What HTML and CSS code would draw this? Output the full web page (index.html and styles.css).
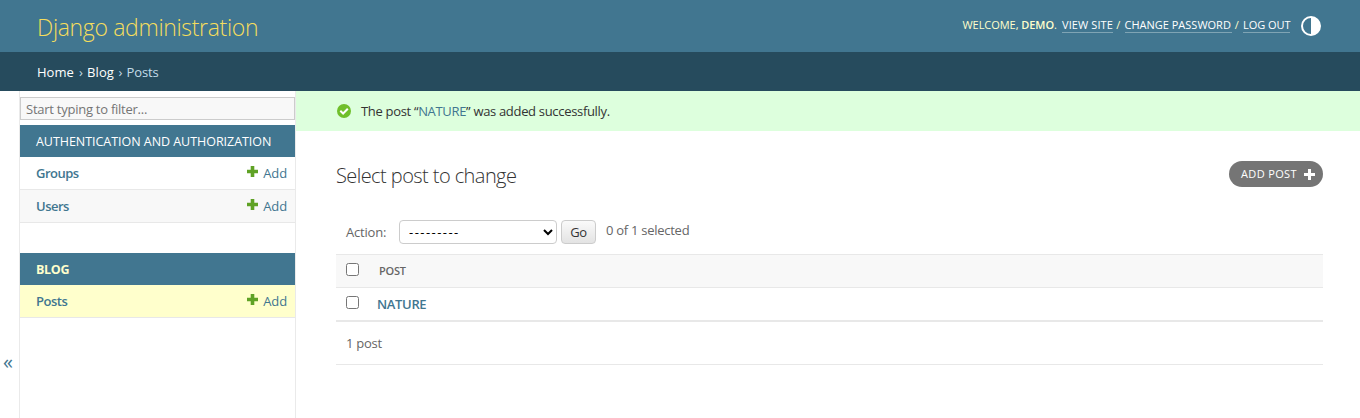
FILE: index.html
```html
<!DOCTYPE html>
<html lang="en">
<head>
<meta charset="utf-8">
<title>Select post to change | Django site admin</title>
<link rel="stylesheet" href="styles.css">
</head>
<body>
<header class="header">
  <h1 class="brand"><span class="t-brand">Django administration</span></h1>
  <div class="user-tools">
    <span class="t-welcome">Welcome, <strong>demo</strong>.</span>
    <a class="t-site" href="#">View site</a><span class="slash">/</span><a class="t-password" href="#">Change password</a><span class="slash">/</span><a class="t-logout" href="#">Log out</a>
    <svg class="theme-icon" viewBox="0 0 20 20"><circle cx="10" cy="10" r="9" fill="none" stroke="#fff" stroke-width="2"/><path d="M10 1a9 9 0 0 1 0 18z" fill="#fff"/></svg>
  </div>
</header>
<nav class="breadcrumbs"><a class="t-home" href="#">Home</a><i>›</i><a class="t-blog" href="#">Blog</a><i>›</i><span class="t-posts">Posts</span></nav>
<div class="main">
  <button class="toggle-nav" aria-label="Toggle navigation">«</button>
  <aside class="sidebar">
    <input class="nav-filter" type="text" placeholder="Start typing to filter...">
    <section class="module">
      <h2><span class="t-auth">Authentication and Authorization</span></h2>
      <div class="model"><a class="name" href="#">Groups</a><a class="add" href="#"><svg viewBox="0 0 11 11"><path d="M3.7 0h3.6v3.7H11v3.6H7.3V11H3.7V7.3H0V3.7h3.7z"/></svg><span>Add</span></a></div>
      <div class="model even"><a class="name" href="#">Users</a><a class="add" href="#"><svg viewBox="0 0 11 11"><path d="M3.7 0h3.6v3.7H11v3.6H7.3V11H3.7V7.3H0V3.7h3.7z"/></svg><span>Add</span></a></div>
    </section>
    <section class="module">
      <h2 class="current-app"><span>Blog</span></h2>
      <div class="model current"><a class="name" href="#">Posts</a><a class="add" href="#"><svg viewBox="0 0 11 11"><path d="M3.7 0h3.6v3.7H11v3.6H7.3V11H3.7V7.3H0V3.7h3.7z"/></svg><span>Add</span></a></div>
    </section>
  </aside>
  <main class="content-wrap">
    <div class="message">
      <svg viewBox="0 0 14 14"><circle cx="7" cy="7" r="7" fill="#70bf2b"/><path d="M3.3 6.8L6.1 9.5L10.8 4.7" fill="none" stroke="#fff" stroke-width="2"/></svg>
      <span class="t-message">The post “<a href="#">NATURE</a>” was added successfully.</span>
    </div>
    <div class="content">
      <div class="title-row">
        <h2 class="title"><span class="t-title">Select post to change</span></h2>
        <a class="add-post" href="#"><span>Add post</span><svg viewBox="0 0 11 11"><path d="M4 0h3v4h4v3H7v4H4V7H0V4h4z"/></svg></a>
      </div>
      <div class="actions">
        <label for="action">Action:</label>
        <select id="action"><option>---------</option></select>
        <button class="go">Go</button>
        <span class="counter">0 of 1 selected</span>
      </div>
      <div class="results">
        <div class="row head"><input type="checkbox" aria-label="Select all"><span class="t-column">Post</span></div>
        <div class="row item"><input type="checkbox" aria-label="Select NATURE"><a class="t-nature" href="#">NATURE</a></div>
      </div>
      <p class="paginator">1 post</p>
    </div>
  </main>
</div>
</body>
</html>
```
FILE: styles.css
```css
* { box-sizing: border-box; }
body {
  margin: 0;
  height: 418px;
  overflow: hidden;
  display: flex;
  flex-direction: column;
  background: #fff;
  color: #333;
  font: 13px/18px "Open Sans", "Noto Sans", sans-serif;
  white-space: nowrap;
}
a { color: #417690; text-decoration: none; }
h1, h2, p { margin: 0; font-weight: 400; }
button { font-family: inherit; }
svg { display: block; flex: none; }

.header {
  height: 52px;
  flex: none;
  display: flex;
  align-items: center;
  justify-content: space-between;
  padding: 0 39px 0 37px;
  background: #417690;
  color: #ffc;
}
.brand { font-size: 23px; line-height: 30px; font-weight: 300; color: #f5dd5d; padding-top: 1px; }
.t-brand { letter-spacing: -.34px; }
.user-tools { display: flex; align-items: center; font-size: 11px; line-height: 14px; text-transform: uppercase; }
.user-tools strong { font-weight: 600; }
.user-tools a { color: #fff; border-bottom: 1px solid #7fa4b4; padding-top: 1px; }
.user-tools > :not(svg) { margin-bottom: 2px; }
.t-welcome { width: 99.5px; letter-spacing: -.05px; }
.t-site { width: 51px; letter-spacing: .1px; }
.t-password { width: 107px; }
.t-logout { width: 47px; letter-spacing: -.05px; }
.slash { width: 11.5px; padding-right: 1px; text-align: center; }
.theme-icon { width: 20px; height: 20px; margin-left: 11px; }

.breadcrumbs {
  height: 39px;
  flex: none;
  display: flex;
  align-items: center;
  padding: 0 37px;
  background: #264b5d;
  color: #c4dce8;
}
.breadcrumbs a { color: #fff; font-weight: 500; }
.breadcrumbs i { width: 12px; text-align: center; font-style: normal; }
.t-home { width: 38px; }
.t-blog { width: 27.5px; letter-spacing: .1px; }
.t-posts { letter-spacing: -.1px; }

.main { flex: 1; display: flex; min-height: 0; }
.toggle-nav {
  width: 19px;
  flex: none;
  padding: 215px 3px 0 0;
  border: 0;
  background: #fff;
  color: #417690;
  font-size: 20px;
  line-height: 20px;
}
.sidebar { width: 277px; flex: none; padding-top: 6px; border: solid #eaeaea; border-width: 0 1px; }
.nav-filter {
  display: block;
  width: 275px;
  height: 23px;
  margin-bottom: 5px;
  padding: 1px 5px;
  border: 1px solid #ccc;
  border-radius: 0;
  background: #f8f8f8;
  font: 13px "Open Sans", "Noto Sans", sans-serif;
  letter-spacing: -.25px;
}
.nav-filter::placeholder { color: #757575; }
.module { margin-bottom: 30px; }
.module h2 { height: 32px; padding: 0 16px; background: #417690; color: #fff; font-size: 12.5px; line-height: 33px; text-transform: uppercase; }
.t-auth { letter-spacing: -.04px; }
.module .current-app { color: #ffc; font-weight: 700; letter-spacing: -.3px; }
.model { height: 33px; display: flex; align-items: center; justify-content: space-between; padding: 0 8px 1px 16px; border-bottom: 1px solid #e8e8e8; }
.even { background: #f8f8f8; }
.current { background: #ffc; }
.name { font-weight: 600; letter-spacing: -.5px; }
.add { display: flex; align-items: center; gap: 5px; letter-spacing: -.1px; }
.add svg { width: 11px; height: 11px; margin-bottom: 2px; fill: #5fa225; }

.content-wrap { flex: 1; min-width: 0; }
.message { height: 40px; display: flex; align-items: center; gap: 10px; padding-left: 41px; background: #dfd; }
.message svg { width: 14px; height: 14px; }
.t-message { letter-spacing: -.32px; padding-bottom: 1px; }
.content { padding: 30px 37px 0 40px; color: #666; }
.title-row { height: 26px; display: flex; align-items: center; justify-content: space-between; }
.title { font-size: 20px; line-height: 26px; font-weight: 300; color: #333; padding-top: 4px; }
.t-title { letter-spacing: -.57px; }
.add-post { width: 94px; height: 26px; border-radius: 13px; display: flex; align-items: center; justify-content: space-between; padding: 0 8px 0 12px; background: #757575; color: #fff; font-size: 11px; letter-spacing: .35px; text-transform: uppercase; }
.add-post svg { width: 11px; height: 11px; fill: #fff; }
.actions { display: flex; height: 24px; margin: 33px 0 10px; padding-left: 10px; }
.actions label { width: 53px; line-height: 25px; letter-spacing: -.2px; }
.actions select { width: 158px; height: 24px; margin-right: 4px; padding: 0 5px; border: 1px solid #ccc; border-radius: 4px; background-color: #fff; color: #000; font: 13px "Open Sans", "Noto Sans", sans-serif; letter-spacing: 1.45px; }
.go { width: 35px; height: 24px; padding: 0; border: 1px solid #ccc; border-radius: 4px; background: linear-gradient(#fafafa, #e3e3e3); color: #333; font-size: 13px; letter-spacing: -.3px; }
.counter { margin-left: 10px; line-height: 21px; letter-spacing: -.27px; }
.row { display: flex; align-items: center; padding-left: 10px; }
.row input { width: 13px; height: 13px; margin: 0; }
.head { height: 34px; border: solid #e8e8e8; border-width: 1px 0; background: #f8f8f8; }
.head input, .item input { margin-bottom: 3px; }
.t-column { margin-left: 20px; font-size: 11px; font-weight: 600; letter-spacing: -.2px; text-transform: uppercase; }
.item { height: 34px; border-bottom: 2px solid #e8e8e8; }
.t-nature { margin-left: 18px; font-weight: 600; letter-spacing: -.35px; }
.paginator { height: 43px; padding-left: 10px; line-height: 43px; border-bottom: 1px solid #e8e8e8; letter-spacing: -.27px; }
```
